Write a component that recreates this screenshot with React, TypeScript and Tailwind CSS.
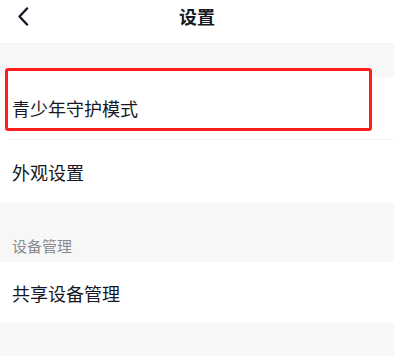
export default function App() {
  return (
    <div
      className="min-h-screen bg-[#f7f7f8] text-[#161823]"
      style={{ fontFamily: '"Noto Sans CJK SC", "Noto Sans", sans-serif' }}
    >
      {/* Header */}
      <header className="relative h-11 bg-white border-b border-[#f0f0f2] flex justify-center pt-[5px]">
        <button className="absolute left-[16px] top-[6px] w-[14px] h-[20px] flex items-center justify-center" aria-label="返回">
          <svg width="12" height="19" viewBox="0 0 12 19" fill="none">
            <path d="M10 1.5L2.5 9.5L10 17.5" stroke="#161823" strokeWidth="2.4" strokeLinecap="round" strokeLinejoin="round" />
          </svg>
        </button>
        <h1 className="text-[18px] leading-[22px] font-semibold">设置</h1>
      </header>

      <div className="h-[33px]" />

      {/* First group */}
      <div className="bg-white">
        <div className="relative h-[62px] flex items-center px-3">
          {/* highlight box */}
          <div className="absolute left-[5px] top-[-9px] w-[367px] h-[63px] bg-white border-[3px] border-[#fd1f1b] rounded-[3px]" />
          <span className="relative text-[18px] leading-6">青少年守护模式</span>
        </div>
        <div className="h-px bg-[#f1f1f3] ml-[9px]" />
        <div className="h-[63px] flex items-center px-3">
          <span className="text-[18px] leading-6">外观设置</span>
        </div>
      </div>

      {/* Device management */}
      <div className="h-[59px] flex items-end px-3 pb-[6px]">
        <span className="text-[15px] leading-5 text-[#8a8b91]">设备管理</span>
      </div>
      <div className="bg-white">
        <div className="h-[61px] flex items-center px-3">
          <span className="text-[18px] leading-6">共享设备管理</span>
        </div>
      </div>
    </div>
  );
}
